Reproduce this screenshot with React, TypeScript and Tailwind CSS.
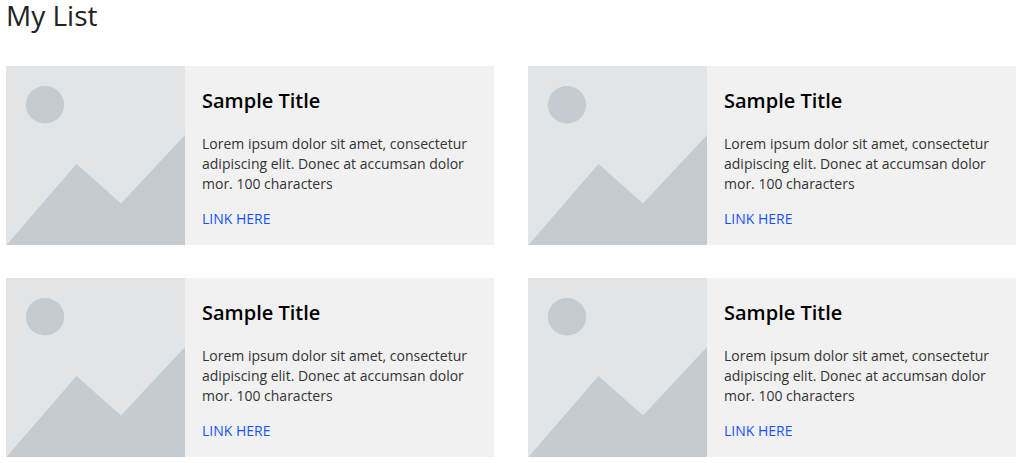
const items = [
  { id: 1, title: 'Sample Title', text: 'Lorem ipsum dolor sit amet, consectetur adipiscing elit. Donec at accumsan dolor mor. 100 characters', link: 'LINK HERE' },
  { id: 2, title: 'Sample Title', text: 'Lorem ipsum dolor sit amet, consectetur adipiscing elit. Donec at accumsan dolor mor. 100 characters', link: 'LINK HERE' },
  { id: 3, title: 'Sample Title', text: 'Lorem ipsum dolor sit amet, consectetur adipiscing elit. Donec at accumsan dolor mor. 100 characters', link: 'LINK HERE' },
  { id: 4, title: 'Sample Title', text: 'Lorem ipsum dolor sit amet, consectetur adipiscing elit. Donec at accumsan dolor mor. 100 characters', link: 'LINK HERE' },
];

const Placeholder = () => (
  <svg viewBox="0 0 179 179" className="w-[179px] shrink-0 bg-[#e1e5e8]" aria-hidden="true">
    <ellipse cx="39" cy="38.800" rx="19.200" ry="18.700" fill="#c4cbd1" />
    <path d="M0.500 179L70.500 98L115 137.500L179 69V179Z" fill="#c4cbd1" />
  </svg>
);

const App = () => {
  return (
    <main className="pl-[6px] pr-[7px] font-['Open_Sans',sans-serif]">
      <h1 className="text-[28px] leading-[30px] text-[#222]">My List</h1>
      <ul className="mt-9 grid grid-cols-2 gap-x-[34px] gap-y-[33px]">
        {items.map((item) => (
          <li key={item.id} className="flex bg-[#f1f1f1]">
            <Placeholder />
            <div className="min-w-0 flex-1 pl-[17px] pr-3 pt-[21px]">
              <h2 className="text-xl leading-7 font-semibold text-black">{item.title}</h2>
              <p className="mt-[19px] text-sm leading-5 text-[#333]">{item.text}</p>
              <a href="#" className="mt-[15px] block w-fit text-sm leading-5 text-[#1751ff]">
                {item.link}
              </a>
            </div>
          </li>
        ))}
      </ul>
    </main>
  );
};

export default App;
